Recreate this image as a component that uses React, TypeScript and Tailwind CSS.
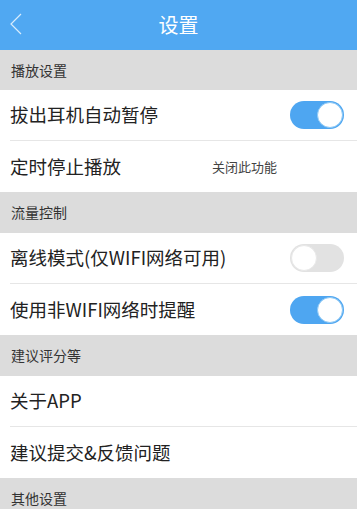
import { useState } from 'react';

const font = { fontFamily: '"Noto Sans CJK SC", "Liberation Sans", sans-serif' };

function Toggle({ on, onClick }: { on: boolean; onClick: () => void }) {
  return (
    <button
      onClick={onClick}
      className={`relative w-[54px] h-[28px] rounded-full shrink-0 ${on ? 'bg-[#4ea6f1]' : 'bg-[#e2e2e2]'}`}
    >
      <span
        className={`absolute top-[1px] w-[26px] h-[26px] rounded-full bg-white border ${
          on ? 'right-[1px] border-[#8cc8f5]' : 'left-[1px] border-[#e8e8e8]'
        }`}
      />
    </button>
  );
}

function Section({ title, first }: { title: string; first?: boolean }) {
  return (
    <div className={`${first ? 'h-[40px]' : 'h-[41px]'} bg-[#dcdcdc] flex items-center pl-[11px] text-[14px] text-[#333]`}>
      {title}
    </div>
  );
}

function Row({ label, children, last }: { label: string; children?: React.ReactNode; last?: boolean }) {
  return (
    <div className="bg-white pl-[10px]">
      <div className={`h-[51px] flex items-center pr-[13px] ${last ? '' : 'border-b border-[#e6e6e6]'}`}>
        {children ? (
          <>
            <span className="text-[18.5px] text-[#222] w-[202px] shrink-0 whitespace-nowrap">{label}</span>
            <div className="flex-1 flex justify-end items-center">{children}</div>
          </>
        ) : (
          <span className="text-[18.5px] text-[#222]">{label}</span>
        )}
      </div>
    </div>
  );
}

export default function App() {
  const [pause, setPause] = useState(true);
  const [offline, setOffline] = useState(false);
  const [remind, setRemind] = useState(true);

  return (
    <div className="w-[357px] h-[509px] overflow-hidden bg-[#dcdcdc]" style={font}>
      <div className="h-[50px] bg-[#50a8f2] flex items-center relative">
        <svg className="absolute left-[8px] top-[12px]" width="16" height="24" viewBox="0 0 16 24">
          <path d="M13 2 L3 12 L13 22" fill="none" stroke="#d8ecfc" strokeWidth="1.2" />
        </svg>
        <div className="flex-1 text-center text-white text-[20px]">设置</div>
      </div>

      <Section title="播放设置" first />
      <Row label="拔出耳机自动暂停">
        <Toggle on={pause} onClick={() => setPause(!pause)} />
      </Row>
      <Row label="定时停止播放" last>
        <span className="flex-1 text-[13px] text-[#444]">关闭此功能</span>
      </Row>

      <Section title="流量控制" />
      <Row label="离线模式(仅WIFI网络可用)">
        <Toggle on={offline} onClick={() => setOffline(!offline)} />
      </Row>
      <Row label="使用非WIFI网络时提醒" last>
        <Toggle on={remind} onClick={() => setRemind(!remind)} />
      </Row>

      <Section title="建议评分等" />
      <Row label="关于APP" />
      <Row label="建议提交&反馈问题" last />

      <Section title="其他设置" />
    </div>
  );
}
